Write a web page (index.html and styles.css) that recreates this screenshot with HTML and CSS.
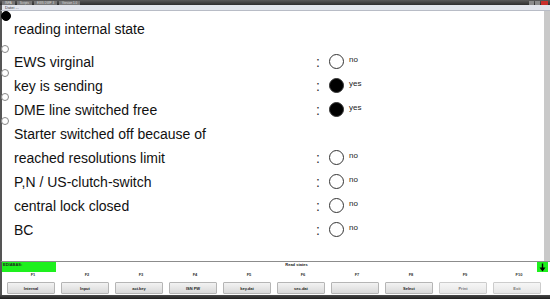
FILE: index.html
```html
<!DOCTYPE html>
<html lang="en">

<head>
    <meta charset="UTF-8">
    <title>INPA - EWS</title>
    <link rel="stylesheet" href="styles.css">
</head>

<body>
    <div class="window">
        <div class="titlebar">
            <span class="tab">INPA</span>
            <span class="tab">Scripts</span>
            <span class="tab">EWS DWP 3</span>
            <span class="tab">Version 1.0</span>
            <span class="winbtns"><i></i><i></i><i class="close"></i></span>
        </div>
        <div class="menubar"><span>Datei ...</span></div>

        <div class="content">
            <div class="row first">
                <span class="mark filled"></span>
                <span class="label">reading internal state</span>
            </div>
            <div class="row">
                <span class="mark"></span>
                <span class="label">EWS virginal</span>
                <span class="colon">:</span><span class="lamp"></span><span class="state">no</span>
            </div>
            <div class="row">
                <span class="mark"></span>
                <span class="label">key is sending</span>
                <span class="colon">:</span><span class="lamp on"></span><span class="state">yes</span>
            </div>
            <div class="row">
                <span class="mark"></span>
                <span class="label">DME line switched free</span>
                <span class="colon">:</span><span class="lamp on"></span><span class="state">yes</span>
            </div>
            <div class="row">
                <span class="mark"></span>
                <span class="label">Starter switched off because of</span>
            </div>
            <div class="row">
                <span class="label">reached resolutions limit</span>
                <span class="colon">:</span><span class="lamp"></span><span class="state">no</span>
            </div>
            <div class="row">
                <span class="label">P,N / US-clutch-switch</span>
                <span class="colon">:</span><span class="lamp"></span><span class="state">no</span>
            </div>
            <div class="row">
                <span class="label">central lock closed</span>
                <span class="colon">:</span><span class="lamp"></span><span class="state">no</span>
            </div>
            <div class="row">
                <span class="label">BC</span>
                <span class="colon">:</span><span class="lamp"></span><span class="state">no</span>
            </div>
        </div>

        <div class="statusbar">
            <span class="ready">EDIABAS:</span>
            <span class="msg">Read states</span>
            <span class="busy">
                <svg width="9" height="9" viewBox="0 0 9 9">
                    <path d="M4.5 0.5 V6" stroke="#000" stroke-width="1.4" />
                    <path d="M1.5 4.5 L4.5 8.5 L7.5 4.5 Z" fill="#000" />
                </svg>
            </span>
        </div>

        <div class="fkeys">
            <span>F1</span><span>F2</span><span>F3</span><span>F4</span><span>F5</span>
            <span>F6</span><span>F7</span><span>F8</span><span>F9</span><span>F10</span>
        </div>
        <div class="buttons">
            <button>Internal</button>
            <button>Input</button>
            <button>act.key</button>
            <button>ISN PW</button>
            <button>key.dat</button>
            <button>sec.dat</button>
            <button></button>
            <button>Select</button>
            <button class="faded">Print</button>
            <button class="faded">Exit</button>
        </div>
        <div class="taskbar"></div>
    </div>
</body>

</html>
```

FILE: styles.css
```css
    body {
        margin: 0;
        padding: 0;
        font-family: "Liberation Sans", Arial, sans-serif;
        background-color: #2b2b2b;
        overflow: hidden;
    }

    .window {
        width: 550px;
        height: 299px;
        display: flex;
        flex-direction: column;
        background-color: #fff;
    }

    /* window chrome */
    .titlebar {
        height: 5px;
        display: flex;
        align-items: center;
        gap: 2px;
        padding-left: 2px;
        background: linear-gradient(to bottom, #5a5a5a, #2e2e2e);
    }

    .titlebar .tab {
        height: 4px;
        padding: 0 3px;
        font-size: 3px;
        line-height: 4px;
        color: #ddd;
        background-color: #777;
    }

    .winbtns {
        margin-left: auto;
        display: flex;
        gap: 1px;
        padding-right: 2px;
    }

    .winbtns i {
        width: 5px;
        height: 4px;
        background-color: #8a8a8a;
    }

    .winbtns i.close {
        width: 7px;
        background-color: #c9302c;
    }

    .menubar {
        height: 6px;
        background-color: #e2e5ec;
        border-bottom: 1px solid #b8bcc6;
        border-left: 2px solid #555;
        box-sizing: border-box;
        font-size: 4px;
        line-height: 5px;
        padding-left: 3px;
        color: #333;
    }

    /* main screen */
    .content {
        height: 250px;
        box-sizing: border-box;
        padding-top: 6px;
        border-left: 2px solid #555;
        border-right: 6px solid #c9c9c9;
        display: flex;
        flex-direction: column;
    }

    .row {
        height: 24px;
        display: grid;
        grid-template-columns: 12px 302px 13px 15px auto;
        align-items: center;
        font-size: 14px;
        color: #111;
    }

    .row.first {
        margin-bottom: 9px;
    }

    .label {
        grid-column: 2;
    }

    .mark {
        grid-column: 1;
        align-self: start;
        width: 6px;
        height: 6px;
        margin-top: -5px;
        margin-left: -1px;
        border: 1px solid #888;
        border-radius: 50%;
        background-color: #fff;
    }

    .mark.filled {
        width: 8px;
        height: 8px;
        margin-top: -6px;
        border-color: #000;
        background-color: #000;
    }

    .colon {
        grid-column: 3;
        font-size: 14px;
        color: #333;
    }

    .lamp {
        grid-column: 4;
        width: 15px;
        height: 15px;
        box-sizing: border-box;
        margin-top: -2px;
        border: 1px solid #333;
        border-radius: 50%;
    }

    .lamp.on {
        background-color: #000;
    }

    .state {
        grid-column: 5;
        margin-left: 5px;
        margin-top: -5px;
        font-size: 8px;
        color: #222;
    }

    /* bottom bars */
    .statusbar {
        height: 11px;
        box-sizing: border-box;
        border-top: 1px solid #8c8c8c;
        border-left: 2px solid #555;
        display: grid;
        grid-template-columns: 54px 1fr 11px;
        padding-right: 2px;
        font-size: 4px;
        font-weight: bold;
        color: #222;
    }

    .ready {
        background-color: #1ef01e;
        line-height: 6px;
        padding-left: 1px;
    }

    .msg {
        text-align: center;
        line-height: 5px;
    }

    .busy {
        background-color: #1ef01e;
        display: flex;
        justify-content: center;
        align-items: center;
    }

    .fkeys,
    .buttons {
        display: grid;
        grid-template-columns: repeat(10, 48px);
        column-gap: 6px;
        padding-left: 7px;
        border-left: 2px solid #555;
        box-sizing: border-box;
    }

    .fkeys {
        height: 8px;
        font-size: 4px;
        font-weight: bold;
        line-height: 6px;
        color: #333;
        text-align: center;
    }

    .buttons {
        height: 15px;
        padding-top: 2px;
        padding-left: 5px;
    }

    .buttons button {
        height: 12px;
        margin: 0;
        padding: 0;
        font-family: "Liberation Sans", Arial, sans-serif;
        font-size: 4px;
        font-weight: bold;
        color: #222;
        background: linear-gradient(to bottom, #f2f2f2, #d9d9d9);
        border: 1px solid #b5b5b5;
        border-radius: 1px;
    }

    .buttons button.faded {
        color: #777;
        background: linear-gradient(to bottom, #f6f6f6, #e6e6e6);
        border-color: #ccc;
    }

    .taskbar {
        flex: 1;
        background: linear-gradient(to bottom, #4a4a4a, #1e1e1e);
    }
```
